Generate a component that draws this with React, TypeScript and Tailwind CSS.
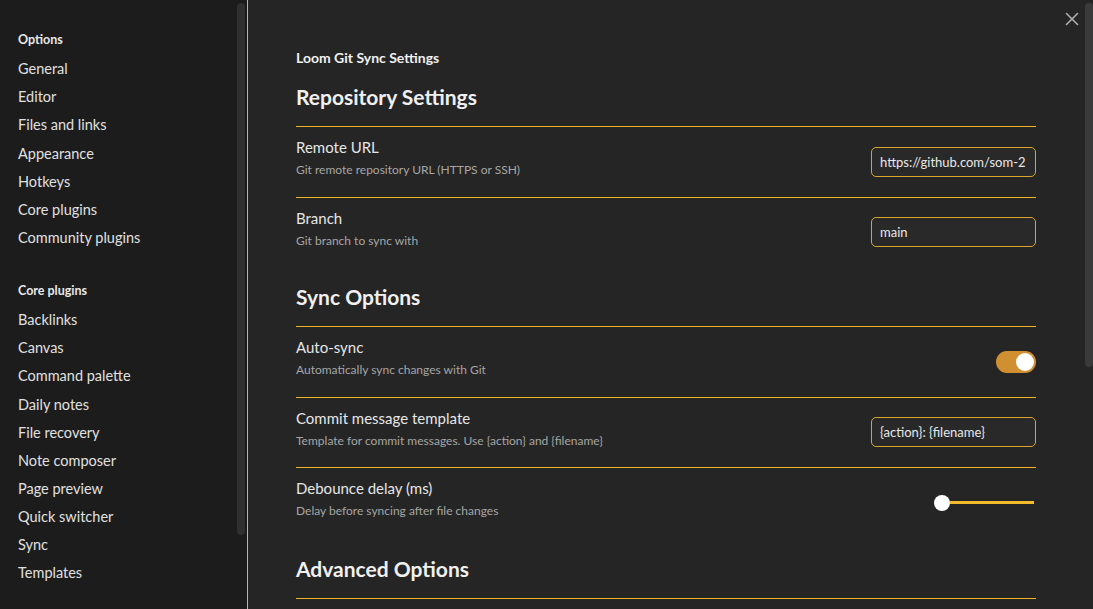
import React, { useState } from 'react';
import { X } from 'lucide-react';

const optionItems = ['General', 'Editor', 'Files and links', 'Appearance', 'Hotkeys', 'Core plugins', 'Community plugins'];
const pluginItems = [
  'Backlinks',
  'Canvas',
  'Command palette',
  'Daily notes',
  'File recovery',
  'Note composer',
  'Page preview',
  'Quick switcher',
  'Sync',
  'Templates',
];

const NavGroup: React.FC<{ title: string; items: string[] }> = ({ title, items }) => (
  <div>
    <div className="h-[28px] flex items-center text-[12.5px] font-bold text-[#e8e8e8]">{title}</div>
    <div className="mt-[1px]">
      {items.map((item) => (
        <div key={item} className="h-[28.15px] flex items-center text-[14.5px] text-[#e0e0e0] cursor-pointer">
          {item}
        </div>
      ))}
    </div>
  </div>
);

const SettingRow: React.FC<{ name: string; desc: string; children?: React.ReactNode }> = ({ name, desc, children }) => (
  <div className="flex items-center justify-between border-t border-[#f0b323]">
    <div className="pt-[10px] pb-[18.5px]">
      <div className="text-[15px] leading-[20px] text-[#e6e6e6]">{name}</div>
      <div className="mt-[5px] text-[12px] leading-[16px] text-[#a6a6a6]">{desc}</div>
    </div>
    {children}
  </div>
);

const TextField: React.FC<{ value: string }> = ({ value }) => (
  <input
    type="text"
    defaultValue={value}
    className="w-[165px] h-[30px] rounded-[5px] border border-[#d9a52a] bg-[#292929] px-[8px] text-[13px] text-[#e8e8e8] outline-none"
  />
);

const SectionHeading: React.FC<{ children: React.ReactNode; className?: string }> = ({ children, className }) => (
  <h2 className={`h-[30px] flex items-center text-[21px] font-bold text-[#f0f0f0] mb-[14px] ${className ?? ''}`}>{children}</h2>
);

const App: React.FC = () => {
  const [autoSync, setAutoSync] = useState(true);

  return (
    <div
      className="w-[1093px] h-[609px] flex overflow-hidden bg-[#252525]"
      style={{ fontFamily: 'Lato, "Noto Sans", sans-serif' }}
    >
      {/* sidebar */}
      <aside className="w-[247px] h-full flex bg-[#1c1c1c] border-r border-[#f0b323] box-content">
        <nav className="flex-1 pl-[18px] pt-[26px]">
          <NavGroup title="Options" items={optionItems} />
          <div className="mt-[25px]">
            <NavGroup title="Core plugins" items={pluginItems} />
          </div>
        </nav>
        <div className="w-[8px] mr-[2px] pt-[3px]">
          <div className="h-[532px] w-full rounded-[4px] bg-[#2f2f2f]" />
        </div>
      </aside>

      {/* main panel */}
      <main className="relative flex-1 flex">
        <button className="absolute right-[10px] top-[8px] text-[#b0b0b0]">
          <X size={22} strokeWidth={1.7} />
        </button>

        <div className="flex-1 pl-[48px] pr-[49px] pt-[47px]">
          <div className="h-[20px] flex items-center text-[14px] font-bold text-[#f0f0f0]">Loom Git Sync Settings</div>

          <SectionHeading className="mt-[15px]">Repository Settings</SectionHeading>
          <SettingRow name="Remote URL" desc="Git remote repository URL (HTTPS or SSH)">
            <TextField value="https://github.com/som-2" />
          </SettingRow>
          <SettingRow name="Branch" desc="Git branch to sync with">
            <TextField value="main" />
          </SettingRow>

          <SectionHeading className="mt-[15px]">Sync Options</SectionHeading>
          <SettingRow name="Auto-sync" desc="Automatically sync changes with Git">
            <button
              onClick={() => setAutoSync(!autoSync)}
              className={`w-[40px] h-[22px] rounded-full flex items-center px-[2px] ${
                autoSync ? 'bg-[#d09032] justify-end' : 'bg-[#444] justify-start'
              }`}
            >
              <span className="w-[18px] h-[18px] rounded-full bg-white" />
            </button>
          </SettingRow>
          <SettingRow name="Commit message template" desc="Template for commit messages. Use {action} and {filename}">
            <TextField value="{action}: {filename}" />
          </SettingRow>
          <SettingRow name="Debounce delay (ms)" desc="Delay before syncing after file changes">
            <div className="w-[100px] mr-[2px] flex items-center">
              <span className="w-[16px] h-[16px] rounded-full bg-white shrink-0" />
              <span className="flex-1 h-[3px] bg-[#f2b92a]" />
            </div>
          </SettingRow>

          <SectionHeading className="mt-[16px]">Advanced Options</SectionHeading>
          <div className="border-t border-[#f0b323]" />
        </div>

        <div className="w-[8px] pt-[3px]">
          <div className="h-[364px] w-full rounded-[4px] bg-[#3a3a3a]" />
        </div>
      </main>
    </div>
  );
};

export default App;
